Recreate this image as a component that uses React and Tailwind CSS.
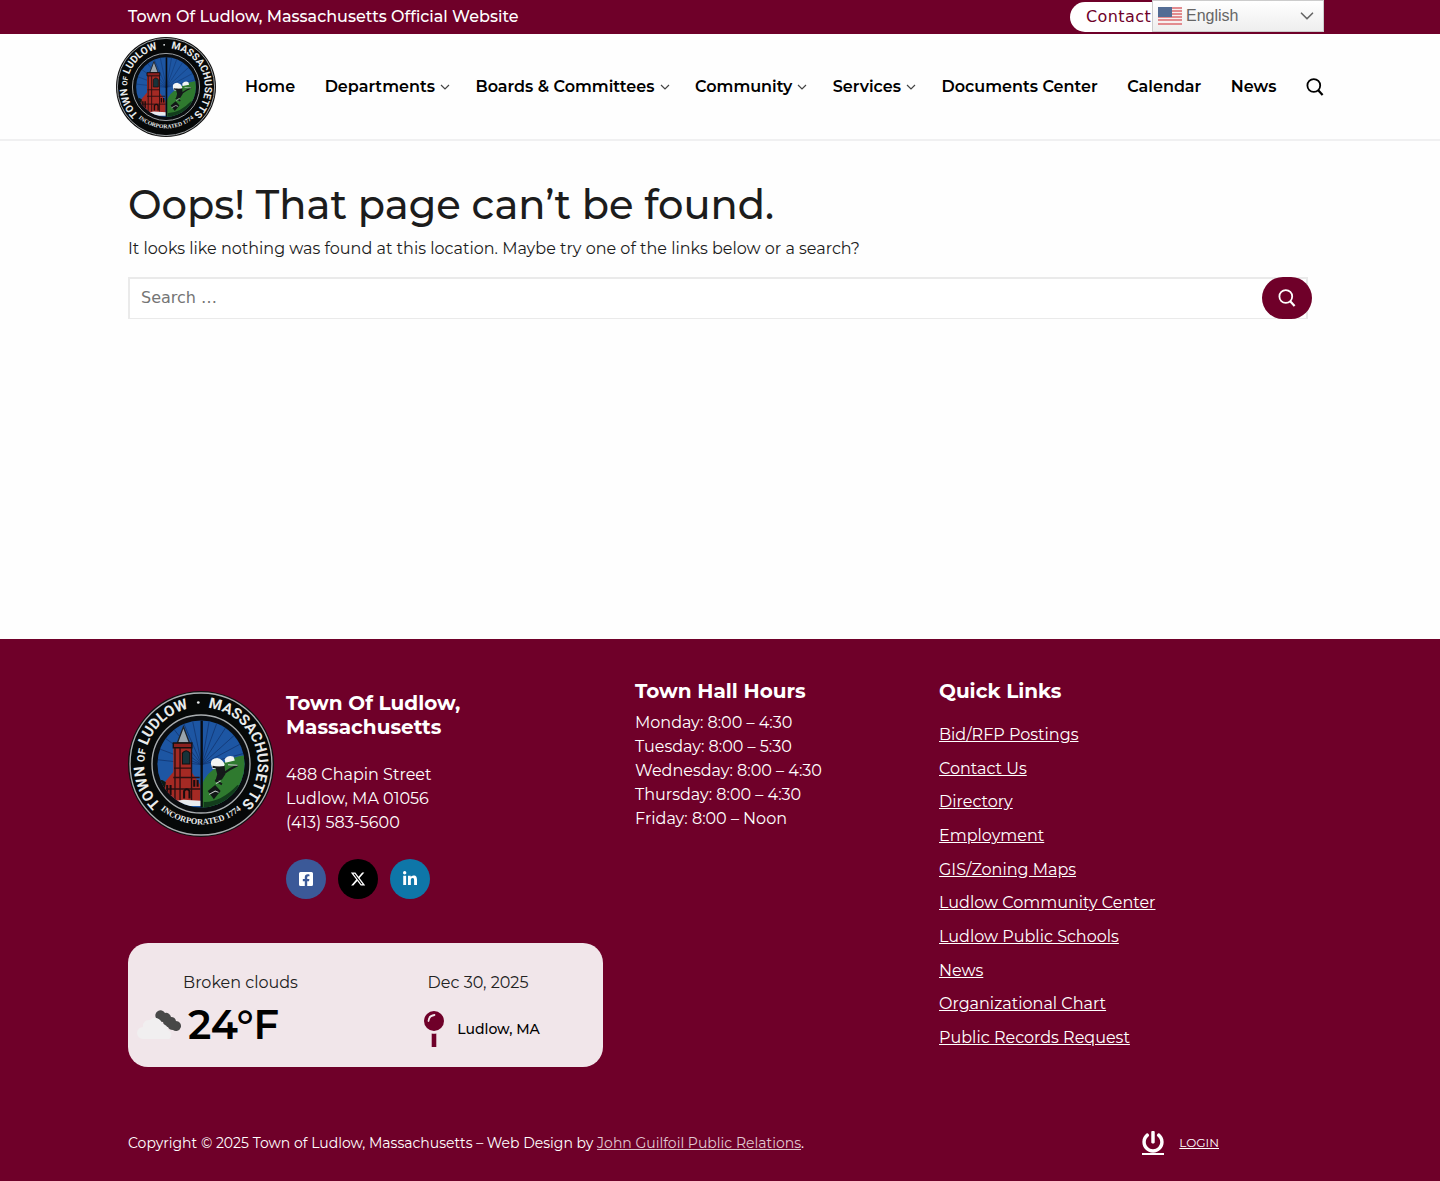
import React, { useId, useState } from 'react';
import { ChevronDown } from 'lucide-react';
import { FaFacebookSquare, FaLinkedinIn, FaPowerOff } from 'react-icons/fa';
import { FaXTwitter } from 'react-icons/fa6';

const NAV_ITEMS = [
  { label: 'Home' },
  { label: 'Departments', menu: true },
  { label: 'Boards & Committees', menu: true },
  { label: 'Community', menu: true },
  { label: 'Services', menu: true },
  { label: 'Documents Center' },
  { label: 'Calendar' },
  { label: 'News' },
];

const HOURS = [
  'Monday: 8:00 – 4:30',
  'Tuesday: 8:00 – 5:30',
  'Wednesday: 8:00 – 4:30',
  'Thursday: 8:00 – 4:30',
  'Friday: 8:00 – Noon',
];

const QUICK_LINKS = [
  'Bid/RFP Postings',
  'Contact Us',
  'Directory',
  'Employment',
  'GIS/Zoning Maps',
  'Ludlow Community Center',
  'Ludlow Public Schools',
  'News',
  'Organizational Chart',
  'Public Records Request',
];

const SearchIcon = () => (
  <svg width="18" height="18" viewBox="0 0 18 18" fill="none" stroke="currentColor" strokeWidth="1.8" aria-hidden="true">
    <circle cx="7.8" cy="7.5" r="6.4" />
    <path d="M12 12 L16.6 17" strokeWidth="2.2" />
  </svg>
);

const MenuArrow = () => (
  <svg className="w-[10px] h-[6px] -mr-1 text-[#444]" viewBox="0 0 10 6" fill="none" stroke="currentColor" strokeWidth="1.2" aria-hidden="true">
    <path d="M1 1 L5 5 L9 1" />
  </svg>
);

const TownSeal = ({ className }) => {
  const id = useId();
  return (
    <svg className={className} viewBox="26 22 432 432" role="img" aria-label="Town of Ludlow seal">
      <defs>
        <path id={`${id}-top`} d="M123 357 A168 168 0 1 1 361 357" />
        <path id={`${id}-bottom`} d="M110 361 A184 184 0 0 0 374 361" />
        <clipPath id={`${id}-clip`}>
          <circle cx="242" cy="238" r="129" />
        </clipPath>
      </defs>
      <circle cx="242" cy="238" r="216" fill="#111" />
      <circle cx="242" cy="238" r="210" fill="#060808" stroke="#a9adb0" strokeWidth="4" />
      <circle cx="242" cy="238" r="145" fill="#0a0d10" stroke="#a9adb0" strokeWidth="4" />
      <g clipPath={`url(#${id}-clip)`}>
        <rect x="110" y="105" width="265" height="265" fill="#1d56a3" />
        <g stroke="#102f68" strokeWidth="2">
          <path d="M244 240 L110 190 M244 240 L110 225 M244 240 L120 150 M244 240 L150 120 M244 240 L185 105 M244 240 L215 100" />
          <path d="M244 240 L375 205 M244 240 L375 170 M244 240 L355 140 M244 240 L325 115 M244 240 L295 100 M244 240 L268 100" />
        </g>
        {/* hillside */}
        <path d="M244 300 Q258 262 290 248 Q330 216 375 212 V370 H244 Z" fill="#2f7a2f" />
        {/* church and tower */}
        <path d="M128 300 L160 262 V186 H214 V262 L240 300 V352 H128 Z" fill="#a52a24" />
        <path d="M172 176 L190 128 L208 176 Z" fill="#9aa4ac" stroke="#20242a" strokeWidth="4" />
        <path d="M160 190 V176 H215 V190 Z" fill="#8c211f" stroke="#161010" strokeWidth="4" />
        <path d="M187 238 V206 Q198 192 209 206 V238 Z" fill="#17333a" stroke="#101010" strokeWidth="3" />
        <path d="M165 190 V345 M180 190 V345 M214 190 V345 M162 250 H214 M160 278 H238 M140 312 H240" stroke="#2b0f10" strokeWidth="4" />
        <path d="M142 330 V300 M152 330 V300 M192 340 V318 Q200 308 208 318 V340 M222 305 V285 M232 305 V285" stroke="#170d0e" strokeWidth="6" fill="none" />
        <path d="M150 350 L190 344 L242 347 V362 H170 Z" fill="#e8ebee" />
        <path d="M110 288 Q122 280 138 292 L132 330 L150 348 L170 370 H110 Z" fill="#0b1a14" />
        <path d="M244 100 V376" stroke="#080b10" strokeWidth="7" />
        {/* worker on the hill */}
        <path d="M272 240 Q268 222 290 220 Q308 224 312 240 L304 254 L276 252 Z" fill="#f2f4f4" />
        <path d="M312 224 Q322 210 338 216 L342 228 L314 234 Z" fill="#f2f4f4" />
        <path d="M284 246 L312 244 L314 268 L304 284 L284 290 L290 268 Z" fill="#15191a" />
        <path d="M284 286 L304 298 M306 268 L330 252 L350 242 M276 246 L296 250" stroke="#15191a" strokeWidth="6" fill="none" />
        <path d="M262 318 L284 300 L300 318 L280 342 Z" fill="#111715" />
        <path d="M266 328 L284 318 L294 322 M286 296 L300 288 M322 240 L350 242" stroke="#c9cfce" strokeWidth="3" fill="none" />
        <path d="M250 350 Q300 352 350 300 L370 310 L330 375 H250 Z" fill="#123d1c" />
      </g>
      <g fill="#e9ebec" fontFamily="Roboto, 'Liberation Sans', sans-serif" fontWeight="700">
        <text fontSize="44">
          <textPath href={`#${id}-top`} startOffset="0">
            TOWN <tspan fontSize="31">OF</tspan> LUDLOW
          </textPath>
        </text>
        <text fontSize="44" textAnchor="end">
          <textPath href={`#${id}-top`} startOffset="100%">MASSACHUSETTS</textPath>
        </text>
        <circle cx="234" cy="56" r="4" />
        <text fontSize="25" fontFamily="'Liberation Serif', serif" textAnchor="middle">
          <textPath href={`#${id}-bottom`} startOffset="50%">INCORPORATED 1774</textPath>
        </text>
      </g>
    </svg>
  );
};

const UsFlag = () => (
  <svg className="w-6 h-[18px]" viewBox="0 0 24 18" aria-hidden="true">
    <rect width="24" height="18" fill="#f7eeee" />
    <path d="M0 1H24M0 4H24M0 7H24M0 10H24M0 13H24M0 17H24" stroke="#dc6b70" strokeWidth="1.4" />
    <rect width="14" height="10" fill="#536c94" />
  </svg>
);

const LanguageSelect = () => {
  const [language, setLanguage] = useState('en');

  return (
    <div className="absolute right-0 top-0 z-10 w-[172px] h-8">
      <select
        aria-label="Language"
        value={language}
        onChange={(e) => setLanguage(e.target.value)}
        className="w-full h-8 pl-[33px] appearance-none border border-[#ccc] bg-linear-to-b from-white to-[#eeeeee] text-base leading-6 text-[#666] font-['Liberation_Sans',sans-serif]"
      >
        <option value="en">English</option>
      </select>
      <div className="absolute inset-0 flex items-center justify-between px-[6px] pointer-events-none">
        <UsFlag />
        <ChevronDown className="size-[22px] text-[#666]" strokeWidth={1.8} />
      </div>
    </div>
  );
};

const TopBar = () => (
  <div className="bg-[#6f0029]">
    <div className="relative max-w-[1208px] h-[34px] mx-auto pl-3 flex items-center">
      <p className="text-white font-medium">Town Of Ludlow, Massachusetts Official Website</p>
      <a
        href="#contact"
        className="ml-auto mr-[126px] w-32 h-[30px] pl-4 flex items-center rounded-full bg-white text-[#6f0029] tracking-wide font-['DejaVu_Sans',sans-serif]"
      >
        Contact
      </a>
      <LanguageSelect />
    </div>
  </div>
);

const Header = () => (
  <header className="border-b-2 border-[#f0f0f1]">
    <div className="max-w-[1208px] mx-auto pt-[3px] pb-[2px] flex items-center">
      <a href="#home" className="shrink-0">
        <TownSeal className="size-[100px]" />
      </a>
      <nav className="ml-[29px] flex-1 flex items-center justify-between text-black font-semibold">
        {NAV_ITEMS.map((item) => (
          <a key={item.label} href="#nav" className="flex items-center gap-[5px] whitespace-nowrap">
            {item.label}
            {item.menu && <MenuArrow />}
          </a>
        ))}
        <button type="button" aria-label="Search">
          <SearchIcon />
        </button>
      </nav>
    </div>
  </header>
);

const NotFound = () => (
  <main className="max-w-[1184px] mx-auto pt-10 pb-80">
    <h1 className="text-[40px] leading-[48px] font-medium text-[#1c1c1c]">Oops! That page can’t be found.</h1>
    <p className="mt-2 leading-6 text-[#1c1c1c]">
      It looks like nothing was found at this location. Maybe try one of the links below or a search?
    </p>
    <form className="mt-4 flex pr-1" onSubmit={(e) => e.preventDefault()}>
      <input
        type="search"
        aria-label="Search for"
        placeholder="Search …"
        className="flex-1 h-[42px] pl-[11px] pr-14 pb-[2px] border-2 border-b border-[#eaeaea] bg-white text-base placeholder:text-[#757575] font-['DejaVu_Sans',sans-serif]"
      />
      <button
        type="submit"
        aria-label="Search"
        className="-ml-[46px] -mr-1 w-[50px] h-[42px] flex items-center justify-center rounded-full bg-[#6f0029] text-white"
      >
        <SearchIcon />
      </button>
    </form>
  </main>
);

const SocialLinks = () => (
  <div className="mt-6 flex gap-3 text-white">
    <a href="#facebook" aria-label="Facebook" className="size-10 flex items-center justify-center rounded-full bg-[#3b5998]">
      <FaFacebookSquare className="size-4" />
    </a>
    <a href="#x" aria-label="X" className="size-10 flex items-center justify-center rounded-full bg-black">
      <FaXTwitter className="size-4" />
    </a>
    <a href="#linkedin" aria-label="LinkedIn" className="size-10 flex items-center justify-center rounded-full bg-[#0e76a8]">
      <FaLinkedinIn className="size-4" />
    </a>
  </div>
);

const Weather = () => (
  <div className="mt-11 h-[124px] pt-7 grid grid-cols-[9fr_10fr] rounded-[20px] bg-[#f1e6ea] text-black">
    <div>
      <p className="text-center leading-6 text-[#222]">Broken clouds</p>
      <div className="mt-[6px] pl-2 flex items-center gap-[6px]">
        <svg className="w-[46px] h-8" viewBox="0 0 46 32" aria-hidden="true">
          <path d="M20 9a5 5 0 0 1 9-5a5 5 0 0 1 6 4a5 5 0 0 1 5 4a5 5 0 1 1-3 9q-4 0-5-3q-4 0-5-5q-5 0-7-4Z" fill="#484848" />
          <path d="M7 30a6 6 0 0 1 0-12a6 6 0 0 1 7-7a7 7 0 0 1 12 4a6 6 0 0 1 6 6a5 5 0 0 1 1 9Z" fill="#f1eff0" />
        </svg>
        <p className="text-[40px] leading-[48px] font-semibold">24°F</p>
      </div>
    </div>
    <div>
      <p className="text-center leading-6 text-[#222]">Dec 30, 2025</p>
      <div className="mt-4 pl-2 flex items-center justify-center gap-[13px]">
        <svg className="w-5 h-9" viewBox="0 0 20 36" aria-hidden="true">
          <circle cx="10" cy="10" r="10" fill="#6f0029" />
          <path d="M4.5 10 Q5 4.5 10.5 4" fill="none" stroke="#f1e6ea" strokeWidth="1.8" strokeLinecap="round" />
          <path d="M7.7 22.5 Q10 23 12.3 22.5 V36 H7.7 Z" fill="#6f0029" />
        </svg>
        <p className="text-sm leading-6 font-medium">Ludlow, MA</p>
      </div>
    </div>
  </div>
);

const Footer = () => (
  <footer className="bg-[#6f0029] text-white">
    <div className="max-w-[1184px] mx-auto pt-10">
      <div className="grid grid-cols-[475fr_272fr_373fr] gap-8">
        <div>
          <div className="pt-3 flex gap-3">
            <TownSeal className="size-[146px] shrink-0" />
            <div>
              <h2 className="text-xl leading-6 font-bold">
                Town Of Ludlow,
                <br />
                Massachusetts
              </h2>
              <address className="mt-6 not-italic leading-6">
                488 Chapin Street
                <br />
                Ludlow, MA 01056
                <br />
                (413) 583-5600
              </address>
              <SocialLinks />
            </div>
          </div>
          <Weather />
        </div>
        <div>
          <h2 className="text-xl leading-6 font-bold">Town Hall Hours</h2>
          <ul className="mt-2 leading-6">
            {HOURS.map((line) => (
              <li key={line}>{line}</li>
            ))}
          </ul>
        </div>
        <div className="flex flex-col">
          <h2 className="text-xl leading-6 font-bold">Quick Links</h2>
          <ul className="mt-5 mb-[17px] flex-1 flex flex-col justify-between leading-6">
            {QUICK_LINKS.map((label) => (
              <li key={label}>
                <a href="#quick" className="underline">{label}</a>
              </li>
            ))}
          </ul>
        </div>
      </div>
      <div className="pt-16 pb-[26px] pr-[93px] flex items-center justify-between">
        <p className="text-sm leading-6">
          Copyright © 2025 Town of Ludlow, Massachusetts – Web Design by{' '}
          <a href="#jgpr" className="underline text-[#e0c8d1]">John Guilfoil Public Relations</a>.
        </p>
        <div className="flex items-center gap-[15px]">
          <a href="#login" aria-label="Log in" className="border-b-2 border-white">
            <FaPowerOff className="size-[22px]" />
          </a>
          <a href="#login" className="text-xs leading-5 underline">LOGIN</a>
        </div>
      </div>
    </div>
  </footer>
);

export default function App() {
  return (
    <div className="bg-[#fefefe] text-base leading-6 font-['Montserrat','Inter',sans-serif]">
      <TopBar />
      <Header />
      <NotFound />
      <Footer />
    </div>
  );
}
